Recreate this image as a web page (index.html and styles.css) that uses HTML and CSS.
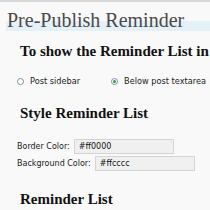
FILE: index.html
```html
<!DOCTYPE html>
<html lang="en">
<head>
  <meta charset="UTF-8">
  <title>Pre-Publish Reminder</title>
  <link rel="stylesheet" href="styles.css">
</head>
<body>
  <div class="wrap">
    <h2 class="title">Pre-Publish Reminder</h2>

    <h3>To show the Reminder List in</h3>
    <div class="radios">
      <label class="radio"><span class="dot"></span>Post sidebar</label>
      <label class="radio"><span class="dot on"></span>Below post textarea</label>
    </div>

    <h3>Style Reminder List</h3>
    <div class="field">
      <span class="lbl">Border Color:</span>
      <span class="box">#ff0000</span>
    </div>
    <div class="field">
      <span class="lbl">Background Color:</span>
      <span class="box">#ffcccc</span>
    </div>

    <h3>Reminder List</h3>
  </div>
</body>
</html>
```

FILE: styles.css
```css
body {
  margin: 0;
  background: #f9f9f9;
  border-top: 2px solid #d8d8d8;
  font-family: 'DejaVu Sans', Verdana, sans-serif;
  color: #333;
  overflow: hidden;
}
.wrap {
  padding-left: 6px;
}
.title {
  margin: 8px 0 0;
  padding-left: 1px;
  font-family: 'Liberation Serif', serif;
  font-weight: normal;
  font-size: 20px;
  line-height: 21px;
  color: #4a4a4a;
  background: linear-gradient(#f9f9f9 0, #f9f9f9 11px, #e4f1f9 11px);
  white-space: nowrap;
}
h3 {
  margin: 12px 0 0 14px;
  font-family: 'Liberation Serif', serif;
  font-size: 15px;
  line-height: 16px;
  color: #111;
  white-space: nowrap;
}
.radios {
  display: flex;
  gap: 31px;
  margin: 17px 0 0 11px;
  font-size: 8.2px;
  color: #222;
  white-space: nowrap;
}
.radios + h3 {
  margin-top: 19px;
}
.radio {
  display: flex;
  align-items: center;
  gap: 6px;
}
.dot {
  width: 5px;
  height: 5px;
  border: 1px solid #7a8fa8;
  border-radius: 50%;
  background: #fff;
  display: flex;
  align-items: center;
  justify-content: center;
}
.dot.on::after {
  content: "";
  width: 3px;
  height: 3px;
  border-radius: 50%;
  background: #2aa52a;
}
.field {
  display: flex;
  align-items: center;
  gap: 4px;
  margin: 2px 0 0 11px;
  font-size: 8px;
  color: #222;
}
h3 + .field {
  margin-top: 18px;
}
.box {
  width: 94px;
  height: 13px;
  line-height: 13px;
  padding-left: 4px;
  border: 1px solid #d4d4d4;
  background: #f0f0f0;
  color: #111;
}
.field + h3 {
  margin-top: 20px;
}
```
